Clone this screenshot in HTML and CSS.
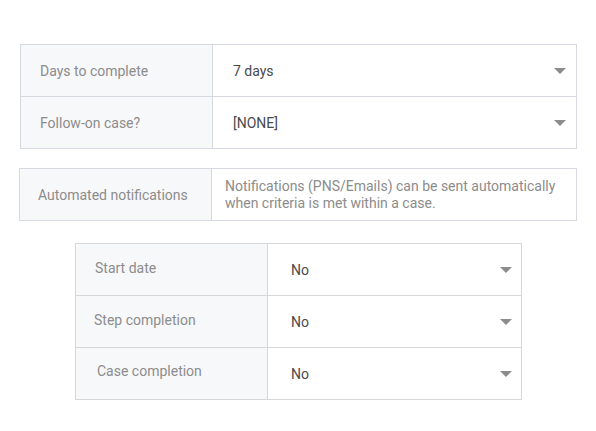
FILE: index.html
```html
<!DOCTYPE html>
<html>
<head>
<meta charset="utf-8">
<link rel="stylesheet" href="styles.css">
</head>
<body>
<div class="page">
  <div class="panel panel-a">
    <div class="row">
      <div class="label">Days to complete</div>
      <div class="value select"><span>7 days</span><span class="caret"></span></div>
    </div>
    <div class="row">
      <div class="label">Follow-on case?</div>
      <div class="value select"><span>[NONE]</span><span class="caret"></span></div>
    </div>
  </div>

  <div class="panel panel-b">
    <div class="row">
      <div class="label label-b">Automated notifications</div>
      <div class="value desc">Notifications (PNS/Emails) can be sent automatically when criteria is met within a case.</div>
    </div>
  </div>

  <div class="panel panel-c">
    <div class="row">
      <div class="label lc1">Start date</div>
      <div class="value select vc"><span>No</span><span class="caret"></span></div>
    </div>
    <div class="row">
      <div class="label lc2">Step completion</div>
      <div class="value select vc"><span>No</span><span class="caret"></span></div>
    </div>
    <div class="row">
      <div class="label lc3">Case completion</div>
      <div class="value select vc"><span>No</span><span class="caret"></span></div>
    </div>
  </div>
</div>
</body>
</html>
```

FILE: styles.css
```css
html, body {
  margin: 0;
  padding: 0;
  background: #ffffff;
}
* {
  box-sizing: border-box;
}
body {
  font-family: Roboto, "Liberation Sans", sans-serif;
  font-size: 14px;
}
.page {
  display: flex;
  flex-direction: column;
  padding-top: 44px;
}
.panel {
  border: 1px solid #d6d9df;
  display: flex;
  flex-direction: column;
}
.panel-a {
  margin-left: 20px;
  width: 557px;
}
.panel-b {
  margin-top: 19px;
  margin-left: 19px;
  width: 558px;
}
.panel-c {
  margin-top: 22px;
  margin-left: 75px;
  width: 447px;
  border-color: #d7d7d7;
}
.row {
  display: flex;
  height: 51px;
  box-sizing: content-box;
}
.row + .row {
  border-top: 1px solid #d6d9df;
}
.panel-c .row + .row {
  border-top-color: #d7d7d7;
}
.label {
  width: 192px;
  flex: none;
  padding-left: 19px;
  background: #f7f8fa;
  border-right: 1px solid #d6d9df;
  color: #8c8c8c;
  display: flex;
  align-items: center;
  font-size: 14px;
}
.panel-c .label {
  border-right-color: #d7d7d7;
}
.label-b {
  padding-left: 18px;
}
.lc1 { padding-left: 19px; padding-bottom: 4px; }
.lc2 { padding-left: 18px; padding-bottom: 3px; }
.lc3 { padding-left: 21px; padding-bottom: 5px; }
.value {
  flex: 1;
  display: flex;
  align-items: center;
  color: #4a4a4a;
  font-size: 14px;
}
.select {
  padding-left: 20px;
  padding-right: 10px;
  justify-content: space-between;
}
.vc {
  padding-left: 23px;
  padding-right: 9px;
}
.desc {
  padding-left: 13px;
  padding-right: 10px;
  color: #8c8c8c;
  font-size: 14px;
  line-height: 17px;
}
.caret {
  width: 0;
  height: 0;
  border-left: 6px solid transparent;
  border-right: 6px solid transparent;
  border-top: 6px solid #8c8c8c;
}
```
